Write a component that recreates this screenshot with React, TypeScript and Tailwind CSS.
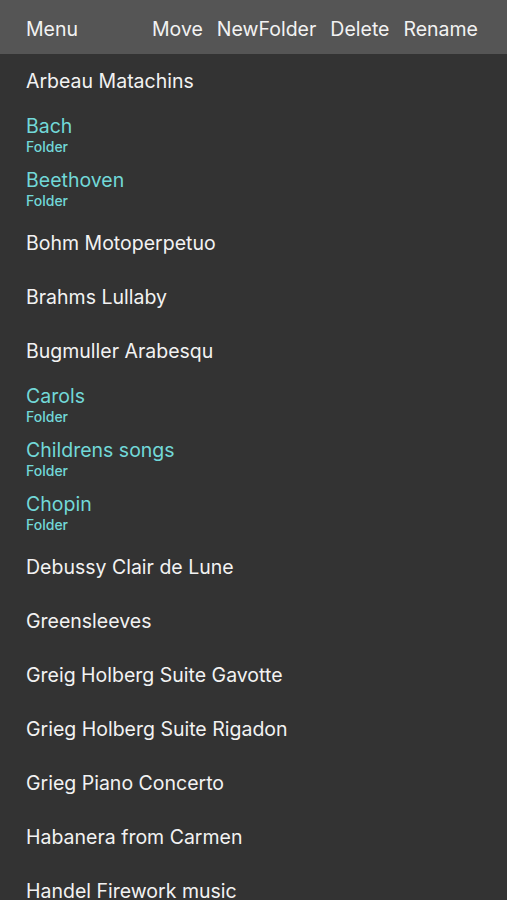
const ITEMS: { name: string; folder?: boolean }[] = [
  { name: "Arbeau Matachins" },
  { name: "Bach", folder: true },
  { name: "Beethoven", folder: true },
  { name: "Bohm Motoperpetuo" },
  { name: "Brahms Lullaby" },
  { name: "Bugmuller Arabesqu" },
  { name: "Carols", folder: true },
  { name: "Childrens songs", folder: true },
  { name: "Chopin", folder: true },
  { name: "Debussy Clair de Lune" },
  { name: "Greensleeves" },
  { name: "Greig Holberg Suite Gavotte" },
  { name: "Grieg Holberg Suite Rigadon" },
  { name: "Grieg Piano Concerto" },
  { name: "Habanera from Carmen" },
  { name: "Handel Firework music" },
];

export default function App() {
  return (
    <div className="h-[900px] overflow-hidden bg-[#333333] font-['Inter',sans-serif] text-[#f2f2f2]">
      {/* Toolbar */}
      <div className="flex h-[54px] items-center bg-[#555555] pl-[26px] pr-[29px] pt-[5px] text-[19.5px]">
        <span>Menu</span>
        <div className="ml-auto flex gap-[14px]">
          <span>Move</span>
          <span>NewFolder</span>
          <span>Delete</span>
          <span>Rename</span>
        </div>
      </div>

      {/* File list */}
      <ul>
        {ITEMS.map((item) => (
          <li key={item.name} className="flex h-[54px] flex-col justify-center pl-[26px]">
            {item.folder ? (
              <div className="text-[#72d8d8]">
                <div className="text-[19.5px] leading-[24px]">{item.name}</div>
                <div className="text-[14px] font-medium leading-[18px]">Folder</div>
              </div>
            ) : (
              <div className="text-[19.5px] leading-[24px]">{item.name}</div>
            )}
          </li>
        ))}
      </ul>
    </div>
  );
}
